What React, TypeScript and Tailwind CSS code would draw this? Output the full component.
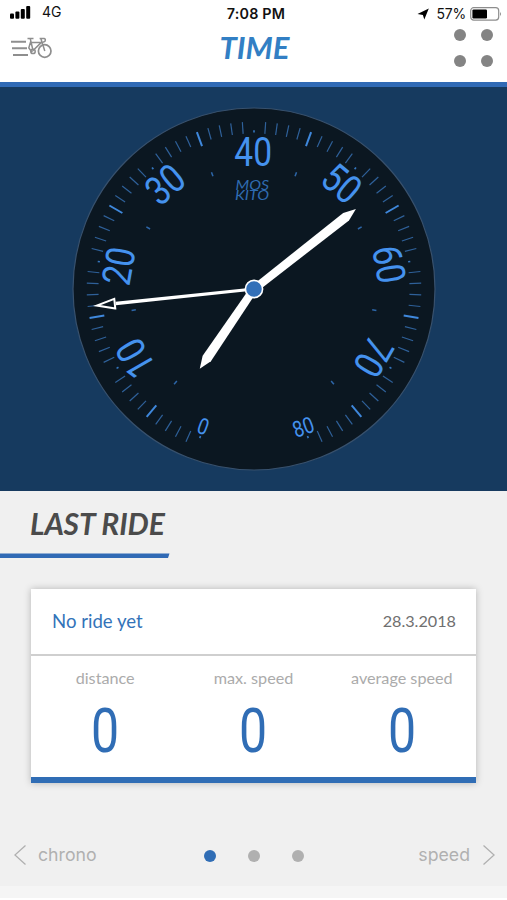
import React from 'react';

const CX = 254;
const CY = 289;

// one unit on the scale = 4 degrees, 0 sits at 200deg, 80 at 160deg
const unitAngle = (unit: number): number => 200 + unit * 4;

const point = (angle: number, r: number): [number, number] => {
  const rad = (angle * Math.PI) / 180;
  return [CX + Math.sin(rad) * r, CY - Math.cos(rad) * r];
};

const HOUR_MARKS = [20, 60, 100, 140, 220, 260, 300, 340];

interface MarkProps {
  angle: number;
  from: number;
  to: number;
  width: number;
  color: string;
}

const Mark: React.FC<MarkProps> = ({ angle, from, to, width, color }) => {
  const [x1, y1] = point(angle, from);
  const [x2, y2] = point(angle, to);
  return <line x1={x1} y1={y1} x2={x2} y2={y2} stroke={color} strokeWidth={width} />;
};

interface NumeralProps {
  value: number;
}

const Numeral: React.FC<NumeralProps> = ({ value }) => {
  const small = value === 0 || value === 80;
  const angle = unitAngle(value);
  const [x, y] = point(angle, small ? 146.5 : 137.5);
  const rotation = small ? angle - 180 : angle;
  const size = small ? 22.5 : 40;
  return (
    <text
      transform={`translate(${x} ${y}) rotate(${rotation}) scale(0.84 1)`}
      x={-1}
      y={size * 0.355}
      textAnchor="middle"
      fontSize={size}
      fill="#4592ee"
      className="font-['Roboto',sans-serif]"
    >
      {value}
    </text>
  );
};

const Dial: React.FC = () => (
  <svg viewBox="0 87 507 404" className="block w-[507px] h-[404px]">
    <circle cx={CX} cy={CY} r={181} fill="#0b1721" stroke="#38516d" strokeWidth={1.2} />

    {/* speed scale */}
    {Array.from({ length: 81 }, (_, unit) => {
      const angle = unitAngle(unit);
      if (unit % 10 === 0) {
        return <Mark key={unit} angle={angle} from={156.5} to={158.7} width={1.6} color="#3577c0" />;
      }
      if (unit % 5 === 0) {
        return <Mark key={unit} angle={angle} from={152} to={167} width={2} color="#3f88dc" />;
      }
      return <Mark key={unit} angle={angle} from={155.5} to={167.3} width={1.2} color="#2f619a" />;
    })}

    {/* hour marks */}
    {HOUR_MARKS.map((angle) => (
      <Mark key={angle} angle={angle} from={120} to={124.3} width={1.5} color="#2d66a8" />
    ))}

    {[0, 10, 20, 30, 40, 50, 60, 70, 80].map((value) => (
      <Numeral key={value} value={value} />
    ))}

    <text
      fill="#2f6bb0"
      fontSize={13.5}
      fontStyle="italic"
      className="font-['Lato',sans-serif]"
    >
      <tspan x={235.5} y={190} textLength={33.5} lengthAdjust="spacingAndGlyphs">MOS</tspan>
      <tspan x={235} y={200} textLength={34} lengthAdjust="spacingAndGlyphs">KITO</tspan>
    </text>

    {/* hands */}
    <polygon
      points="-3.9,0 -5,-84 0,-96.5 5,-84 3.9,0"
      fill="#ffffff"
      transform={`translate(${CX} ${CY}) rotate(214.2)`}
    />
    <polygon
      points="-4,0 -4.7,-117 0,-129.5 4.7,-117 4,0"
      fill="#ffffff"
      transform={`translate(${CX} ${CY}) rotate(51.9)`}
    />
    <g transform={`translate(${CX} ${CY}) rotate(264)`}>
      <polygon points="-1.5,0 -1.8,-139 1.8,-139 1.5,0" fill="#ffffff" />
      <polygon
        points="-4.8,-140 0,-158 4.8,-140"
        fill="#0b1721"
        stroke="#ffffff"
        strokeWidth={2}
        strokeMiterlimit={8}
      />
    </g>
    <circle cx={CX} cy={CY} r={8.6} fill="#3370b8" stroke="#ffffff" strokeWidth={1.6} />
  </svg>
);

const StatusBar: React.FC = () => (
  <div className="grid grid-cols-3 items-center h-[27px] pl-[10px] pr-[5px] font-['Inter',sans-serif] text-[#111111]">
    <div className="flex items-center pb-[3px]">
      <svg viewBox="0 0 21 13" className="w-[21px] h-[13px]" fill="#000000">
        <rect x="0" y="7.6" width="4" height="5.2" rx="1" />
        <rect x="5.4" y="5.6" width="4" height="7.2" rx="1" />
        <rect x="10.8" y="3" width="4" height="9.8" rx="1" />
        <rect x="16.2" y="0" width="4" height="12.8" rx="1" />
      </svg>
      <span className="ml-[11px] text-[14px] leading-[20px]">4G</span>
    </div>
    <span className="text-center text-[14.3px] leading-[20px] tracking-[0.2px] font-semibold whitespace-nowrap">7:08 PM</span>
    <div className="flex items-center justify-end">
      <svg viewBox="0 0 12 12" className="w-[12px] h-[12px]" fill="#000000">
        <path d="M11.8 0.4L7.3 11.6L5.9 6.9L0.5 6Z" />
      </svg>
      <span className="ml-[7px] text-[14px] leading-[20px] tracking-[-0.2px]">57%</span>
      <svg viewBox="0 0 32 14" className="ml-[4px] w-[32px] h-[14px]">
        <rect x="0.7" y="0.7" width="28" height="12.4" rx="3" fill="none" stroke="#8d8d8d" strokeWidth="1.2" />
        <rect x="2.4" y="2.4" width="14.6" height="9" rx="1.2" fill="#000000" />
        <path d="M30 4.8Q31.8 7 30 9.2Z" fill="#777777" />
      </svg>
    </div>
  </div>
);

const Header: React.FC = () => (
  <header className="flex flex-col h-[87px] bg-white border-b-[5px] border-[#306ab5]">
    <StatusBar />
    <div className="grid grid-cols-3 items-start pl-[10px] pr-[14px]">
      <svg viewBox="0 0 44 24" className="mt-[9px] w-[44px] h-[24px]" fill="none" stroke="#8e8e8e">
        <path d="M1 5.7H16M2 12.3H17M3 18.9H18" strokeWidth="2" />
        <circle cx="34.7" cy="15" r="6.3" strokeWidth="1.7" />
        <circle cx="23" cy="15.4" r="2.2" strokeWidth="1.5" />
        <path d="M17.5 2.6H23.5M20.3 2.8L23 14.5L31.4 6.4H21.2M20.8 5.2L18.8 11.8L22 16.4M29.6 2.6H34.2Q36 3 35 5.2L33 6.4M31 3L34.8 15" strokeWidth="1.5" />
      </svg>
      <h1 className="pl-[6px] pt-[1px] text-center font-['Lato',sans-serif] text-[31px] leading-[38px] font-bold italic text-[#327fc4]">
        TIME
      </h1>
      <div className="justify-self-end grid grid-cols-2 gap-x-[15px] gap-y-[14px] mt-[2px]">
        <span className="size-[12px] rounded-full bg-[#848484]" />
        <span className="size-[12px] rounded-full bg-[#848484]" />
        <span className="size-[12px] rounded-full bg-[#848484]" />
        <span className="size-[12px] rounded-full bg-[#848484]" />
      </div>
    </div>
  </header>
);

interface StatProps {
  label: string;
  value: number;
}

const Stat: React.FC<StatProps> = ({ label, value }) => (
  <div className="flex flex-col items-center">
    <span className="pt-[11px] font-['Lato',sans-serif] text-[16.2px] leading-[22px] text-[#ababab] whitespace-nowrap">
      {label}
    </span>
    <span className="mt-[9px] font-['Roboto',sans-serif] text-[61px] leading-[66px] text-[#306db5] scale-x-[0.82]">
      {value}
    </span>
  </div>
);

const LastRide: React.FC = () => (
  <section className="flex flex-col h-[321px]">
    <h2 className="h-[62px] pt-[13px] pl-[30px] font-['Lato',sans-serif] text-[30px] leading-[38px] tracking-[-0.1px] font-bold italic text-[#4b4b4b]">
      LAST RIDE
    </h2>
    <svg viewBox="0 0 170 5" className="w-[170px] h-[5px]" fill="#306ab5">
      <path d="M0 0.6H169.5L168 5H0Z" />
    </svg>
    <div className="mt-[31px] ml-[31px] w-[445px] h-[194px] bg-white border-b-[6px] border-[#306db5] shadow-[0_0_7px_rgba(0,0,0,0.25)]">
      <div className="flex items-center justify-between h-[67px] pl-[21px] pr-[20px] border-b-[2px] border-[#cfcfcf] font-['Lato',sans-serif]">
        <span className="text-[18.6px] text-[#3373b9]">No ride yet</span>
        <span className="text-[16.2px] text-[#6f6f6f]">28.3.2018</span>
      </div>
      <div className="grid grid-cols-3">
        <Stat label="distance" value={0} />
        <Stat label="max. speed" value={0} />
        <Stat label="average speed" value={0} />
      </div>
    </div>
  </section>
);

const PageNav: React.FC = () => (
  <nav className="grid grid-cols-3 items-center h-[61px] mt-[13px] pl-[14px] pr-[12px] font-['Inter',sans-serif] text-[17.7px] text-[#b0b0b0]">
    <div className="flex items-center gap-[12px]">
      <svg viewBox="0 0 12 20" className="w-[12px] h-[20px]" fill="none" stroke="#b0b0b0" strokeWidth="1.3">
        <path d="M11.5 0.6L0.9 10L11.5 19.4" />
      </svg>
      <span>chrono</span>
    </div>
    <div className="flex justify-center gap-[32px] pr-[1px]">
      <span className="size-[12px] rounded-full bg-[#306db5]" />
      <span className="size-[12px] rounded-full bg-[#b0b0b0]" />
      <span className="size-[12px] rounded-full bg-[#b0b0b0]" />
    </div>
    <div className="flex items-center justify-end gap-[13px]">
      <span>speed</span>
      <svg viewBox="0 0 12 20" className="w-[12px] h-[20px]" fill="none" stroke="#b0b0b0" strokeWidth="1.3">
        <path d="M0.5 0.6L11.1 10L0.5 19.4" />
      </svg>
    </div>
  </nav>
);

const App: React.FC = () => (
  <div className="w-[507px] h-[900px] overflow-hidden bg-white">
    <Header />
    <main className="h-[404px] bg-[#163a5f]">
      <Dial />
    </main>
    <div className="h-[395px] bg-[#f0f0f0]">
      <LastRide />
      <PageNav />
    </div>
    <div className="h-[12px] bg-[#f5f5f5]" />
  </div>
);

export default App;
